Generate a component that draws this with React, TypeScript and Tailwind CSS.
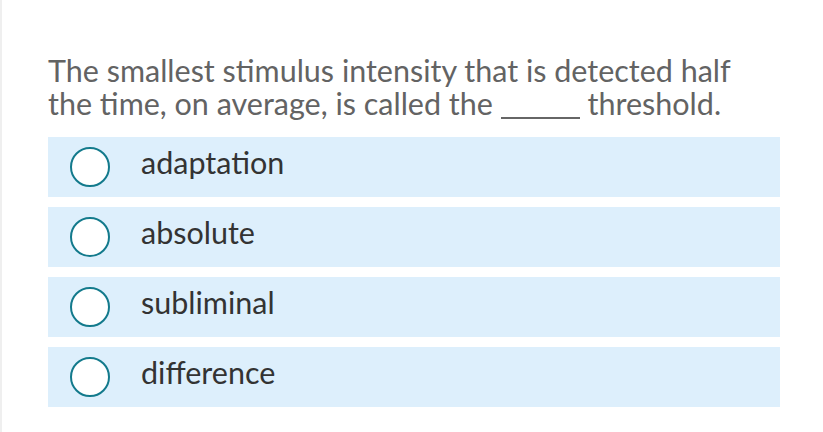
const options = ["adaptation", "absolute", "subliminal", "difference"];

export default function App() {
  return (
    <div
      className="min-h-screen bg-white border-l-2 border-[#efefef] pl-[46px] pr-[43px] pt-[54px]"
      style={{ fontFamily: "Lato, 'Open Sans', sans-serif" }}
    >
      <p className="text-[30.5px] leading-[33px] text-[#636363] whitespace-nowrap">
        The smallest stimulus intensity that is detected half
        <br />
        the time, on average, is called the{" "}
        <span className="inline-block w-[79px] h-[2px] bg-[#666666] -mb-[4px]" />{" "}
        threshold.
      </p>

      <div className="mt-[17px] flex flex-col gap-[10px]">
        {options.map((opt) => (
          <label
            key={opt}
            className="h-[60px] bg-[#ddeffc] flex items-center pl-[22px] cursor-pointer"
          >
            <span className="w-10 h-10 rounded-full border-[2.5px] border-[#137a8c] bg-white shrink-0" />
            <span className="ml-[31px] text-[30.5px] leading-none text-[#333333] -mt-[10px]">
              {opt}
            </span>
          </label>
        ))}
      </div>
    </div>
  );
}
